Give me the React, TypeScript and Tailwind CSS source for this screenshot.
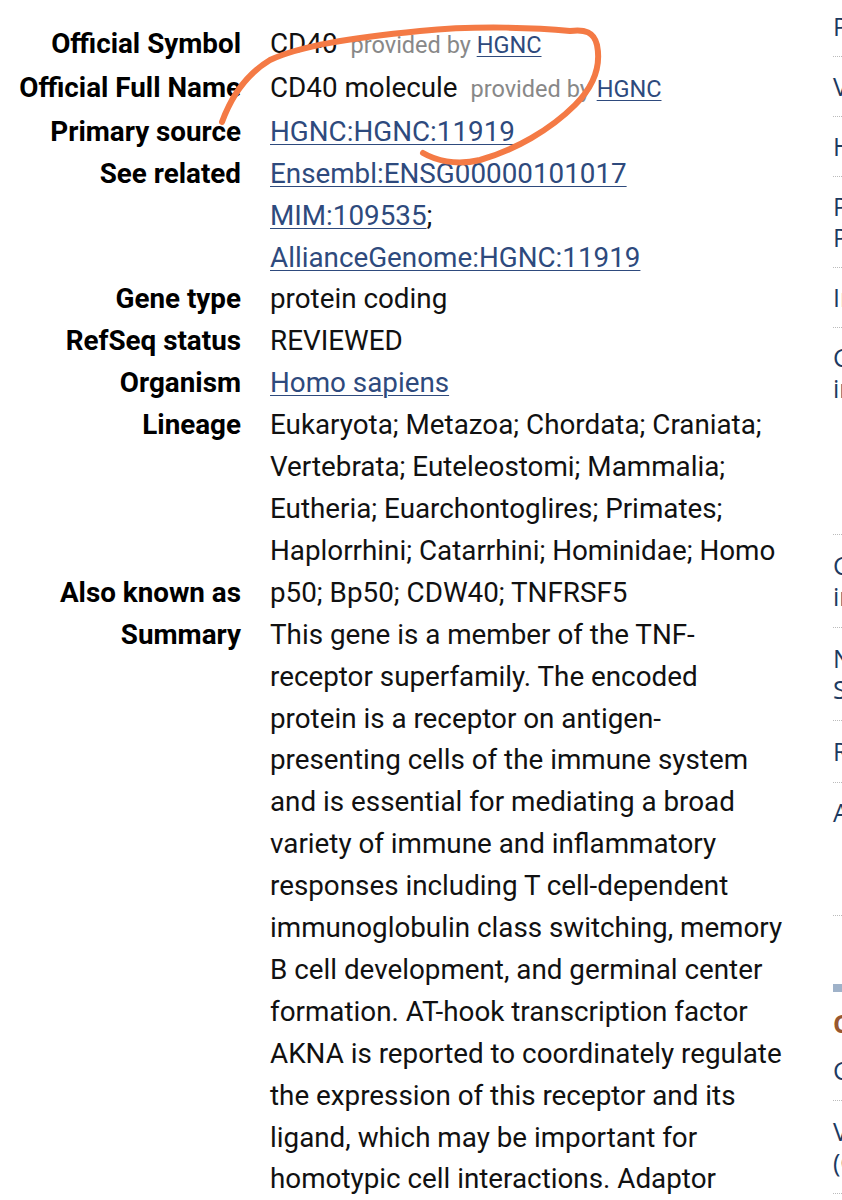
import type { ReactNode } from 'react'

const link = 'text-[#2e4a7d] underline decoration-1 underline-offset-[3px]'

function Row({ label, children }: { label: string; children: ReactNode }) {
  return (
    <div className="grid grid-cols-[241px_1fr] gap-x-[29px]">
      <div className="text-right font-bold text-black">{label}</div>
      <div className="text-[#111]">{children}</div>
    </div>
  )
}

function ProvidedBy() {
  return (
    <span className="ml-[13px] text-[23.5px] text-[#888]">
      provided by <a className={link}>HGNC</a>
    </span>
  )
}

function TocItem({ lines, className = '' }: { lines: string[]; className?: string }) {
  return (
    <div className={`border-b border-dotted border-[#bbb] ${className}`}>
      {lines.map(l => (
        <div key={l} className="whitespace-nowrap">{l}</div>
      ))}
    </div>
  )
}

export default function App() {
  return (
    <div className="relative flex w-[842px] h-[1200px] overflow-hidden bg-white">
      <div className="w-[832px] shrink-0 pt-[23px] text-[27.8px] leading-[41.9px] font-['Roboto',sans-serif]">
        <div className="w-[788px]">
          <Row label="Official Symbol">
            CD40<ProvidedBy />
          </Row>
          <Row label="Official Full Name">
            CD40 molecule<ProvidedBy />
          </Row>
          <Row label="Primary source">
            <a className={link}>HGNC:HGNC:11919</a>
          </Row>
          <Row label="See related">
            <a className={`${link} block w-fit`}>Ensembl:ENSG00000101017</a>
            <span className="block"><a className={link}>MIM:109535</a>;</span>
            <a className={`${link} block w-fit`}>AllianceGenome:HGNC:11919</a>
          </Row>
          <Row label="Gene type">protein coding</Row>
          <Row label="RefSeq status">REVIEWED</Row>
          <Row label="Organism">
            <a className={link}>Homo sapiens</a>
          </Row>
          <Row label="Lineage">
            Eukaryota; Metazoa; Chordata; Craniata; Vertebrata; Euteleostomi; Mammalia; Eutheria;
            Euarchontoglires; Primates; Haplorrhini; Catarrhini; Hominidae; Homo
          </Row>
          <Row label="Also known as">p50; Bp50; CDW40; TNFRSF5</Row>
          <Row label="Summary">
            This gene is a member of the TNF-receptor superfamily. The encoded protein is a receptor on
            antigen-presenting cells of the immune system and is essential for mediating a broad variety
            of immune and inflammatory responses including T cell-dependent immunoglobulin class
            switching, memory B cell development, and germinal center formation. AT-hook transcription
            factor AKNA is reported to coordinately regulate the expression of this receptor and its
            ligand, which may be important for homotypic cell interactions. Adaptor protein TNFR2
            interacts with this receptor and serves as a mediator of the signal transduction.
          </Row>
        </div>
      </div>

      <div className="w-[200px] shrink-0 pl-px text-[25px] leading-[31px] text-[#1d3a5f] font-['Open_Sans',sans-serif]">
        <TocItem lines={['Phenotypes']} className="pt-[11px] pb-[14px]" />
        <TocItem lines={['Variation']} className="py-[14px]" />
        <TocItem lines={['HIV-1 interactions']} className="py-[14px]" />
        <TocItem lines={['Pathways from', 'PubChem']} className="py-[14px]" />
        <TocItem lines={['Interactions']} className="py-[14px]" />
        <TocItem lines={['General gene', 'information']} className="h-[207px] pt-[14px]" />
        <TocItem lines={['General protein', 'information']} className="py-[15px]" />
        <TocItem lines={['NCBI Reference', 'Sequences (RefSeq)']} className="py-[15px]" />
        <TocItem lines={['Related sequences']} className="py-[15px]" />
        <TocItem lines={['Additional links']} className="h-[133px] pt-[14px]" />
        <div className="mt-[68px] h-[8px] w-full bg-[#9fb2c9]" />
        <div className="mt-[16px] font-bold text-[#98572f]">Customize</div>
        <TocItem lines={['Genome Data Viewer']} className="pt-[16px] pb-[14px]" />
        <TocItem lines={['Variation Viewer', '(GRCh38.p14)']} className="py-[15px]" />
      </div>

      <svg className="pointer-events-none absolute left-0 top-0" width="842" height="1200">
        <path
          d="M222,122 C230,100 245,75 270,60 C300,46 350,38 420,31 C480,25 540,28 570,31 C585,29 594,32 597,45 C601,65 595,85 575,105 C550,130 515,150 480,160 C455,166 435,160 423,153"
          fill="none"
          stroke="#f47a45"
          strokeWidth="6"
          strokeLinecap="round"
        />
      </svg>
    </div>
  )
}
